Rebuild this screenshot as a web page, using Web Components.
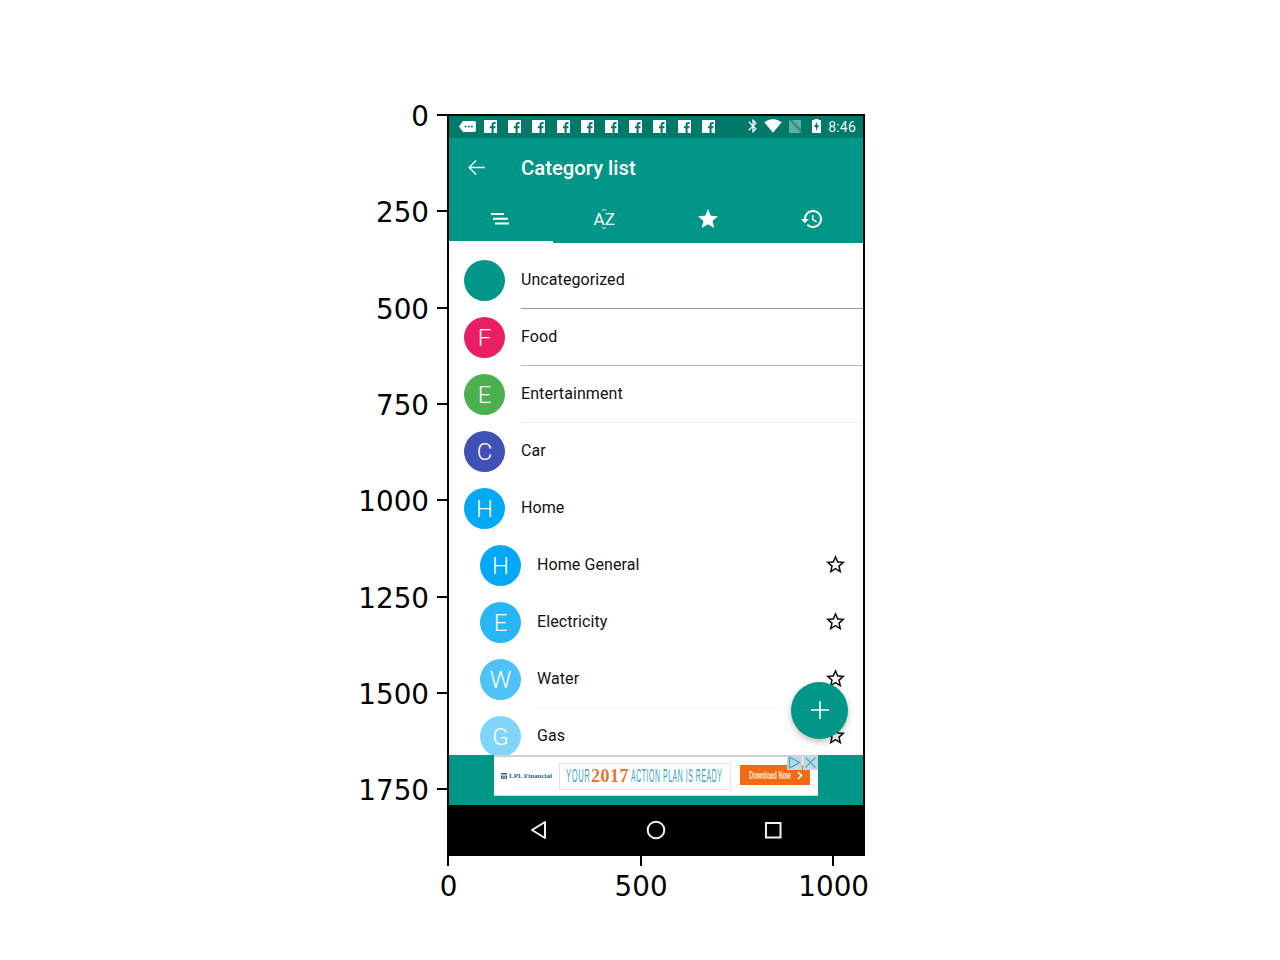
<!DOCTYPE html>
<html>
<head>
<meta charset="utf-8">
<title>Category list</title>
<style>
  html, body { margin: 0; padding: 0; background: #fff; }
</style>
</head>
<body>
<plot-figure>
  <y-axis slot="y">
    <axis-tick side="y">0</axis-tick>
    <axis-tick side="y">250</axis-tick>
    <axis-tick side="y">500</axis-tick>
    <axis-tick side="y">750</axis-tick>
    <axis-tick side="y">1000</axis-tick>
    <axis-tick side="y">1250</axis-tick>
    <axis-tick side="y">1500</axis-tick>
    <axis-tick side="y">1750</axis-tick>
  </y-axis>
  <phone-screen>
    <status-bar></status-bar>
    <app-toolbar></app-toolbar>
    <category-list>
      <category-row letter="" color="#009688" line="#9a9a9a">Uncategorized</category-row>
      <category-row letter="F" color="#e91e63" line="#bcbcbc">Food</category-row>
      <category-row letter="E" color="#4caf50" line="#ececec">Entertainment</category-row>
      <category-row letter="C" color="#3f51b5">Car</category-row>
      <category-row letter="H" color="#03a9f4">Home</category-row>
      <category-row letter="H" color="#03a9f4" sub>Home General</category-row>
      <category-row letter="E" color="#29b6f6" sub>Electricity</category-row>
      <category-row letter="W" color="#4fc3f7" sub line="#f6f6f6">Water</category-row>
      <category-row letter="G" color="#81d4fa" sub>Gas</category-row>
    </category-list>
    <ad-banner></ad-banner>
    <nav-bar></nav-bar>
    <add-fab></add-fab>
  </phone-screen>
  <x-axis slot="x">
    <axis-tick side="x">0</axis-tick>
    <axis-tick side="x">500</axis-tick>
    <axis-tick side="x">1000</axis-tick>
  </x-axis>
</plot-figure>

<script>
const figureTemplate = document.createElement('template');
figureTemplate.innerHTML = `
<style>
  :host {
    display: grid;
    grid-template-columns: 100px 418px;
    grid-template-rows: 742px auto;
    margin-left: 347px;
    padding-top: 114px;
    font-family: "DejaVu Sans", sans-serif;
    color: #000;
  }
  ::slotted([slot="y"]) { grid-column: 1; grid-row: 1; }
  ::slotted([slot="x"]) { grid-column: 2; grid-row: 2; }
  .frame {
    grid-column: 2;
    grid-row: 1;
    border: 2px solid #000;
    width: 414px;
    height: 738px;
  }
</style>
<slot name="y"></slot>
<div class="frame"><slot></slot></div>
<slot name="x"></slot>
`;

class PlotFigure extends HTMLElement {
  constructor(){
    super();
    this.attachShadow({mode: 'open'});
    this.shadowRoot.appendChild(figureTemplate.content.cloneNode(true));
  }
}

const yAxisTemplate = document.createElement('template');
yAxisTemplate.innerHTML = `
<style>
  :host {
    display: flex;
    flex-direction: column;
    margin-top: -47px;
  }
</style>
<slot></slot>
`;

class YAxis extends HTMLElement {
  constructor(){
    super();
    this.attachShadow({mode: 'open'});
    this.shadowRoot.appendChild(yAxisTemplate.content.cloneNode(true));
  }
}

const xAxisTemplate = document.createElement('template');
xAxisTemplate.innerHTML = `
<style>
  :host {
    display: flex;
    margin-left: -95.3px;
    width: 600px;
  }
</style>
<slot></slot>
`;

class XAxis extends HTMLElement {
  constructor(){
    super();
    this.attachShadow({mode: 'open'});
    this.shadowRoot.appendChild(xAxisTemplate.content.cloneNode(true));
  }
}

const tickTemplate = document.createElement('template');
tickTemplate.innerHTML = `
<style>
  :host {
    display: flex;
    align-items: center;
    flex: none;
    font-size: 27.78px;
    line-height: 32px;
  }
  :host([side="y"]) {
    height: 96.3px;
    justify-content: flex-end;
    gap: 8px;
  }
  :host([side="x"]) {
    width: 192.6px;
    flex-direction: column;
    gap: 5px;
  }
  :host([side="y"]) .text { padding-top: 4px; }
  :host([side="x"]) .text { padding-left: 1px; }
  .mark { background: #000; flex: none; }
  :host([side="y"]) .mark { width: 10px; height: 2px; order: 2; }
  :host([side="x"]) .mark { width: 2px; height: 10px; }
</style>
<span class="mark"></span>
<span class="text"><slot></slot></span>
`;

class AxisTick extends HTMLElement {
  constructor(){
    super();
    this.attachShadow({mode: 'open'});
    this.shadowRoot.appendChild(tickTemplate.content.cloneNode(true));
  }
}

const phoneTemplate = document.createElement('template');
phoneTemplate.innerHTML = `
<style>
  :host {
    display: flex;
    flex-direction: column;
    position: relative;
    height: 738px;
    overflow: hidden;
    background: #fff;
    font-family: Roboto, sans-serif;
  }
</style>
<slot></slot>
`;

class PhoneScreen extends HTMLElement {
  constructor(){
    super();
    this.attachShadow({mode: 'open'});
    this.shadowRoot.appendChild(phoneTemplate.content.cloneNode(true));
  }
}

const fbIcon = `<svg class="fb" width="13" height="13" viewBox="0 0 13 13"><path fill="#fff" d="M0 0h13v13H9.600V8.200h1.700l.3-2H9.600V5c0-.6.2-1 1-1h1V2.200c-.3 0-.8-.1-1.400-.1-1.500 0-2.600.9-2.600 2.600v1.500H5.900v2h1.700V13H0z"/></svg>`;

const statusTemplate = document.createElement('template');
statusTemplate.innerHTML = `
<style>
  :host {
    display: flex;
    align-items: center;
    flex: none;
    box-sizing: border-box;
    height: 22px;
    background: #00796b;
    padding: 0 7px 2px 10px;
    color: #fff;
    font-size: 14px;
  }
  .msg { margin-right: 8px; }
  .fbs { display: flex; gap: 11.2px; }
  .right { display: flex; align-items: center; margin-left: auto; }
  .right svg { display: block; }
  .time { margin-left: 7px; padding-top: 2px; letter-spacing: .2px; color: #e6f2f0; }
</style>
<svg class="msg" width="17" height="11" viewBox="0 0 17 11">
  <path fill="#fff" d="M4 0h11a2 2 0 0 1 2 2v7a2 2 0 0 1-2 2H4L0 5.500z"/>
  <circle cx="6.500" cy="5.500" r="1" fill="#00796b"/><circle cx="9.700" cy="5.500" r="1" fill="#00796b"/><circle cx="12.900" cy="5.500" r="1" fill="#00796b"/>
</svg>
<div class="fbs">${fbIcon.repeat(10)}</div>
<div class="right">
  <svg width="16" height="16" viewBox="0 0 24 24" style="margin-right:3px"><path fill="#fff" d="M17.710 7.710L12 2h-1v7.590L6.410 5 5 6.410 10.590 12 5 17.590 6.410 19 11 14.410V22h1l5.710-5.710-4.300-4.290 4.300-4.290zM13 5.830l1.880 1.880L13 9.590V5.830zm1.880 10.460L13 18.170v-3.760l1.880 1.880z"/></svg>
  <svg width="18" height="14" viewBox="0 0 24 18" style="margin-right:7px"><path fill="#fff" d="M12 18L23.600 4C23.200 3.700 18.700 0 12 0S.8 3.700.4 4z"/></svg>
  <svg width="12" height="13" viewBox="0 0 12 13" style="margin-right:11px"><path fill="#5fae9f" d="M0 0h12v13H0z"/><path fill="#2f8f80" d="M0 0l12 13V9L3 0z"/></svg>
  <svg width="9" height="14" viewBox="0 0 9 14"><path fill="#fff" d="M2.500 0h4v1H9v13H0V1h2.500z"/><path fill="#00796b" d="M5.200 2.500L2 8h2v4l3-6H5z"/></svg>
  <span class="time">8:46</span>
</div>
`;

class StatusBar extends HTMLElement {
  constructor(){
    super();
    this.attachShadow({mode: 'open'});
    this.shadowRoot.appendChild(statusTemplate.content.cloneNode(true));
  }
}

const toolbarTemplate = document.createElement('template');
toolbarTemplate.innerHTML = `
<style>
  :host {
    display: flex;
    flex-direction: column;
    flex: none;
    background: #009688;
    color: #fff;
  }
  .top {
    display: flex;
    align-items: center;
    height: 58px;
    padding-left: 15px;
  }
  .top svg { flex: none; margin-right: 32px; }
  .title { font-size: 20.3px; font-weight: 500; padding-top: 2px; }
  .tabs { display: flex; height: 47px; }
  .tab {
    flex: 1;
    display: flex;
    align-items: center;
    justify-content: center;
    box-sizing: border-box;
    padding-top: 1px;
    border-bottom: 2px solid transparent;
  }
  .tab.on { border-bottom-color: #fff; }
  .az {
    display: flex;
    flex-direction: column;
    align-items: center;
    font-size: 17px;
    line-height: 16px;
  }
  .az svg { display: block; }
</style>
<div class="top">
  <svg width="25" height="25" viewBox="0 0 24 24"><path fill="#fff" d="M20 11.300H6.500l5.600-5.600-.9-.9L4 12l7.200 7.200.9-.9-5.600-5.600H20z"/></svg>
  <div class="title">Category list</div>
</div>
<div class="tabs">
  <div class="tab on">
    <svg width="20" height="14" viewBox="0 0 20 14" style="margin-right:2px"><path fill="#fff" d="M1 1h13v2H1zM3 5.800h15v2H3zM5 10.500h14v2H5z"/></svg>
  </div>
  <div class="tab">
    <div class="az">
      <svg width="6" height="3" viewBox="0 0 6 3"><path fill="none" stroke="#fff" d="M1 3l2-2 2 2"/></svg>
      <span>AZ</span>
      <svg width="6" height="3" viewBox="0 0 6 3"><path fill="none" stroke="#fff" d="M1 0l2 2 2-2"/></svg>
    </div>
  </div>
  <div class="tab">
    <svg width="24" height="24" viewBox="0 0 24 24"><path fill="#fff" d="M12 17.270L18.180 21l-1.640-7.030L22 9.240l-7.190-.61L12 2 9.190 8.630 2 9.240l5.460 4.730L5.820 21z"/></svg>
  </div>
  <div class="tab">
    <svg width="24" height="24" viewBox="0 0 24 24" style="margin-left:2px"><path fill="#fff" d="M13 3c-4.970 0-9 4.030-9 9H1l3.890 3.890.07.14L9 12H6c0-3.870 3.130-7 7-7s7 3.130 7 7-3.130 7-7 7c-1.930 0-3.680-.79-4.940-2.060l-1.420 1.420C8.270 19.990 10.510 21 13 21c4.970 0 9-4.030 9-9s-4.030-9-9-9zm-1 5v5l4.280 2.540.72-1.210-3.500-2.080V8H12z"/></svg>
  </div>
</div>
`;

class AppToolbar extends HTMLElement {
  constructor(){
    super();
    this.attachShadow({mode: 'open'});
    this.shadowRoot.appendChild(toolbarTemplate.content.cloneNode(true));
  }
}

const listTemplate = document.createElement('template');
listTemplate.innerHTML = `
<style>
  :host {
    display: block;
    flex: 1;
    min-height: 0;
    overflow: hidden;
    padding-top: 9px;
    box-sizing: border-box;
  }
</style>
<slot></slot>
`;

class CategoryList extends HTMLElement {
  constructor(){
    super();
    this.attachShadow({mode: 'open'});
    this.shadowRoot.appendChild(listTemplate.content.cloneNode(true));
  }
}

const rowTemplate = document.createElement('template');
rowTemplate.innerHTML = `
<style>
  :host {
    display: flex;
    height: 57px;
    padding-left: 15px;
    box-sizing: border-box;
    font-size: 16px;
    letter-spacing: .08px;
    color: #111;
  }
  :host([sub]) { padding-left: 31px; }
  .dot {
    flex: none;
    align-self: flex-start;
    width: 41px;
    height: 41px;
    border-radius: 50%;
    margin: 7.5px 16px 0 0;
    display: flex;
    align-items: center;
    justify-content: center;
    color: #fff;
    font-size: 24px;
    font-weight: 300;
    padding-top: 2px;
    box-sizing: border-box;
  }
  .body {
    flex: 1;
    display: flex;
    align-items: center;
    padding: 0 16px 1.5px 0;
    border-bottom: 1px solid transparent;
  }
  .name { flex: 1; }
  .star { display: none; }
  :host([sub]) .star { display: block; }
</style>
<div class="dot"></div>
<div class="body">
  <div class="name"><slot></slot></div>
  <svg class="star" width="23" height="23" viewBox="0 0 24 24"><path fill="#111" d="M22 9.240l-7.190-.62L12 2 9.190 8.630 2 9.240l5.460 4.730L5.820 21 12 17.270 18.180 21l-1.630-7.030L22 9.240zM12 15.400l-3.760 2.270 1-4.280-3.320-2.880 4.380-.38L12 6.100l1.710 4.040 4.380.38-3.320 2.880 1 4.280L12 15.400z"/></svg>
</div>
`;

class CategoryRow extends HTMLElement {
  constructor(){
    super();
    this.attachShadow({mode: 'open'});
    this.shadowRoot.appendChild(rowTemplate.content.cloneNode(true));
    const dot = this.shadowRoot.querySelector('.dot');
    dot.textContent = this.getAttribute('letter');
    dot.style.background = this.getAttribute('color');
    const line = this.getAttribute('line');
    if(line) this.shadowRoot.querySelector('.body').style.borderBottomColor = line;
  }
}

const adTemplate = document.createElement('template');
adTemplate.innerHTML = `
<style>
  :host {
    display: flex;
    justify-content: center;
    align-items: flex-start;
    flex: none;
    height: 50px;
    background: #009688;
  }
  .ad {
    position: relative;
    box-sizing: border-box;
    width: 324px;
    height: 41px;
    background: #fff;
    border-top: 2px solid #cfcfcf;
    border-bottom: 1px solid #d8d8d8;
    display: flex;
    align-items: center;
    font-family: "Liberation Sans", sans-serif;
    white-space: nowrap;
  }
  .logo {
    display: flex;
    align-items: center;
    gap: 2px;
    width: 58px;
    padding-left: 7px;
    flex: none;
    box-sizing: border-box;
    font: bold 7px "Liberation Serif", serif;
    color: #2f5f8f;
  }
  .pitch {
    flex: none;
    box-sizing: border-box;
    width: 172px;
    height: 27px;
    margin-left: 7px;
    border: 1px solid #e4e4e4;
    display: flex;
    align-items: center;
    padding-left: 6px;
    color: #3a9fc9;
    font-size: 19px;
  }
  .pitch span { display: block; flex: none; transform-origin: left center; }
  .pitch .thin { letter-spacing: 1.500px; }
  .pitch .yr { font: bold 18px "Liberation Serif", serif; color: #e8742c; letter-spacing: .5px; }
  .cta {
    flex: none;
    box-sizing: border-box;
    width: 70px;
    height: 20px;
    margin-left: 9px;
    margin-top: -2px;
    background: #f26a12;
    color: #ffe9d8;
    font-size: 11px;
    font-weight: bold;
    display: flex;
    align-items: center;
    padding-left: 9px;
  }
  .cta span { display: block; width: 48px; flex: none; transform: scaleX(.53); transform-origin: left center; }
  .choice {
    position: absolute;
    top: -2px;
    right: 0;
    display: flex;
    gap: 1px;
  }
  .choice svg { display: block; background: #c9d6da; }
</style>
<div class="ad">
  <div class="logo">
    <svg width="6" height="6" viewBox="0 0 6 6"><path fill="#2f5f8f" d="M0 0h6v1.500H0zM0 2.500h1.500V6H0zM2.200 2.500h1.500V6H2.200zM4.500 2.500H6V6H4.500z"/></svg>
    <span>LPL Financial</span>
  </div>
  <div class="pitch">
    <span class="thin" style="width:25px;transform:scaleX(.4)">YOUR</span>
    <span class="yr" style="width:40px">2017</span>
    <span class="thin" style="width:92px;transform:scaleX(.365)">ACTION PLAN IS READY</span>
  </div>
  <div class="cta">
    <span>Download Now</span>
    <svg width="6" height="9" viewBox="0 0 6 9"><path fill="none" stroke="#fff" stroke-width="1.500" d="M1 1l3.500 3.500L1 8"/></svg>
  </div>
  <div class="choice">
    <svg width="15" height="15" viewBox="0 0 15 15"><path fill="none" stroke="#29b3d8" stroke-width="1.300" d="M2.500 2v11l10-5.500z"/></svg>
    <svg width="15" height="15" viewBox="0 0 15 15"><path fill="none" stroke="#29b3d8" stroke-width="1.200" d="M2.500 2.500l10 10M12.500 2.500l-10 10"/></svg>
  </div>
</div>
`;

class AdBanner extends HTMLElement {
  constructor(){
    super();
    this.attachShadow({mode: 'open'});
    this.shadowRoot.appendChild(adTemplate.content.cloneNode(true));
  }
}

const navTemplate = document.createElement('template');
navTemplate.innerHTML = `
<style>
  :host {
    display: flex;
    align-items: center;
    flex: none;
    height: 49px;
    background: #000;
    padding-left: 81px;
  }
  svg { display: block; flex: none; }
</style>
<svg width="18" height="20" viewBox="0 0 18 20" style="margin-right:98px"><path fill="none" stroke="#f2f2f2" stroke-width="2" stroke-linejoin="round" d="M15 2v16L2 10z"/></svg>
<svg width="20" height="20" viewBox="0 0 20 20" style="margin-right:98px"><circle cx="10" cy="10" r="8.300" fill="none" stroke="#f2f2f2" stroke-width="2"/></svg>
<svg width="18" height="18" viewBox="0 0 18 18"><path fill="none" stroke="#f2f2f2" stroke-width="2" d="M2 2h14.500v14.500H2z"/></svg>
`;

class NavBar extends HTMLElement {
  constructor(){
    super();
    this.attachShadow({mode: 'open'});
    this.shadowRoot.appendChild(navTemplate.content.cloneNode(true));
  }
}

const fabTemplate = document.createElement('template');
fabTemplate.innerHTML = `
<style>
  :host {
    position: absolute;
    right: 15px;
    bottom: 115.5px;
    width: 57px;
    height: 57px;
    border-radius: 50%;
    background: #009688;
    display: flex;
    align-items: center;
    justify-content: center;
    box-shadow: 0 3px 6px rgba(0,0,0,.25);
  }
</style>
<svg width="18" height="18" viewBox="0 0 18 18"><path fill="#fff" d="M8.200 0h1.600v8.200H18v1.600H9.800V18H8.200V9.800H0V8.200h8.200z"/></svg>
`;

class AddFab extends HTMLElement {
  constructor(){
    super();
    this.attachShadow({mode: 'open'});
    this.shadowRoot.appendChild(fabTemplate.content.cloneNode(true));
  }
}

window.customElements.define('plot-figure', PlotFigure);
window.customElements.define('y-axis', YAxis);
window.customElements.define('x-axis', XAxis);
window.customElements.define('axis-tick', AxisTick);
window.customElements.define('phone-screen', PhoneScreen);
window.customElements.define('status-bar', StatusBar);
window.customElements.define('app-toolbar', AppToolbar);
window.customElements.define('category-list', CategoryList);
window.customElements.define('category-row', CategoryRow);
window.customElements.define('ad-banner', AdBanner);
window.customElements.define('nav-bar', NavBar);
window.customElements.define('add-fab', AddFab);
</script>
</body>
</html>
